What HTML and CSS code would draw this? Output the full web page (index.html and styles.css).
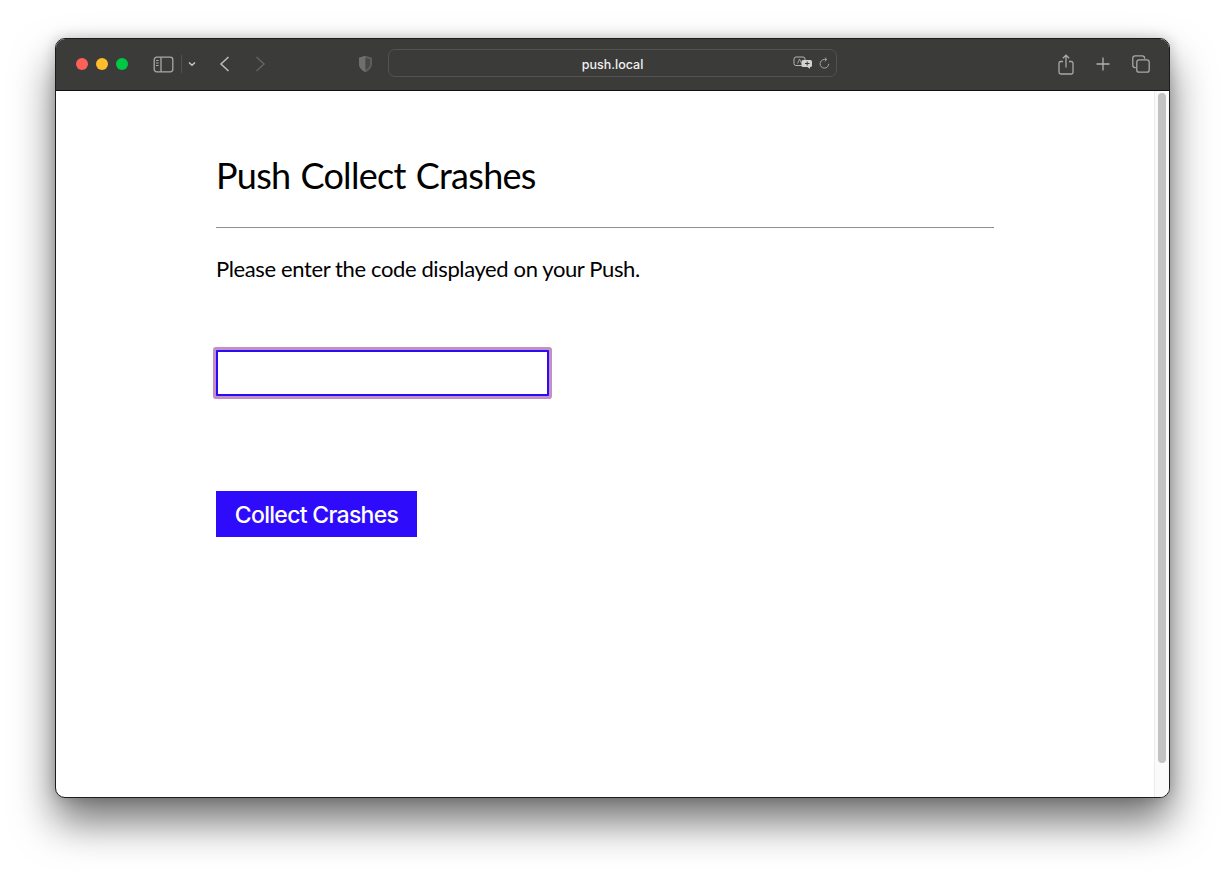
FILE: index.html
```html
<!DOCTYPE html>
<html lang="en">
<head>
<meta charset="utf-8">
<title>Push Collect Crashes</title>
<link rel="stylesheet" href="styles.css">
</head>
<body>
<div class="window">
  <header class="toolbar">
    <div class="lights">
      <span class="light red"></span><span class="light yellow"></span><span class="light green"></span>
    </div>
    <svg class="ic sidebar" width="21" height="17" viewBox="0 0 21 17" fill="none" stroke="#a9a9a8" stroke-width="1.3"><rect x="1.2" y="1.2" width="18.6" height="14.6" rx="2.5"/><path d="M8 1.2v14.6"/><path d="M3 4.5h2.6M3 7h2.6M3 9.500h2.600" stroke-width="1"/></svg>
    <span class="sep"></span>
    <svg class="ic chev" width="8" height="6" viewBox="0 0 8 6" fill="none" stroke="#c6c6c5" stroke-width="1.500"><path d="M1 1.500l3 2.800 3-2.800"/></svg>
    <svg class="ic back" width="11" height="16" viewBox="0 0 11 16" fill="none" stroke="#bdbdbc" stroke-width="1.500"><path d="M9.500 1L2 8l7.500 7"/></svg>
    <svg class="ic fwd" width="11" height="16" viewBox="0 0 11 16" fill="none" stroke="#636362" stroke-width="1.500"><path d="M1.500 1L9 8l-7.500 7"/></svg>
    <svg class="ic shield" width="15" height="18" viewBox="0 0 15 18"><path d="M7.500 .8L14 2.800v6c0 4-3 6.800-6.500 8.400C4 15.600 1 12.800 1 8.800v-6z" fill="#5d5d5c"/><path d="M7.500 .8L1 2.800v6c0 4 3 6.800 6.500 8.400z" fill="#6f6f6e"/><path d="M7.500 3L12 4.300v4.500c0 2.800-2 4.800-4.500 6.100z" fill="#484847"/></svg>
    <div class="address">
      <span class="host">push.local</span>
      <svg class="ic translate" width="20" height="14" viewBox="0 0 20 14" fill="none"><rect x="1" y="1" width="11" height="8.500" rx="2" stroke="#b5b5b4"/><path d="M4.500 7.500L6.500 3l2 4.500" stroke="#b5b5b4" stroke-width=".8"/><path d="M10 4h7.500a1.500 1.500 0 0 1 1.500 1.500v4a1.500 1.500 0 0 1-1.500 1.500H17v2l-2.500-2H10a1.500 1.500 0 0 1-1.500-1.500v-4A1.500 1.500 0 0 1 10 4z" fill="#d2d2d1"/><path d="M12 7.500h4.500M14.200 5.500v4" stroke="#3c3c3b"/></svg>
      <svg class="ic reload" width="11" height="13" viewBox="0 0 11 13" fill="none" stroke="#a5a5a4" stroke-width="1"><path d="M9.700 6.800a4.300 4.300 0 1 1-4.300-4.300h2"/><path d="M5.800 .6l2 1.900-2 1.900"/></svg>
    </div>
    <svg class="ic share" width="16" height="21" viewBox="0 0 16 21" fill="none" stroke="#a9a9a8" stroke-width="1.300"><path d="M5 7.500H2.800A1.800 1.800 0 0 0 1 9.300v8.900A1.800 1.800 0 0 0 2.800 20h10.400a1.800 1.800 0 0 0 1.800-1.800V9.300a1.800 1.800 0 0 0-1.800-1.800H11"/><path d="M8 13.500V1.300M4.800 4.300L8 1.200l3.200 3.100"/></svg>
    <svg class="ic plus" width="14" height="14" viewBox="0 0 14 14" stroke="#b2b2b1" stroke-width="1.300"><path d="M7 .5v13M.5 7h13"/></svg>
    <svg class="ic tabs" width="18" height="18" viewBox="0 0 18 18" fill="none" stroke="#a9a9a8" stroke-width="1.300"><path d="M3.800 12.600H3A2.300 2.300 0 0 1 .8 10.300V3A2.300 2.300 0 0 1 3 .8h7.300a2.300 2.300 0 0 1 2.300 2.200v.8"/><rect x="4.800" y="4.800" width="12.400" height="12.400" rx="2.300"/></svg>
  </header>
  <div class="viewport">
    <main class="content">
      <h1 class="title">Push Collect Crashes</h1>
      <hr class="rule">
      <p class="lead">Please enter the code displayed on your Push.</p>
      <input class="code" type="text" aria-label="Code">
      <button class="submit" type="button">Collect Crashes</button>
    </main>
    <div class="scrollbar"><span class="thumb"></span></div>
  </div>
</div>
</body>
</html>
```
FILE: styles.css
```css
* { box-sizing: border-box; }
html, body { margin: 0; height: 100%; background: #fff; overflow: hidden; }
.window {
  width: 1115px;
  height: 760px;
  margin: 38px 0 0 55px;
  border: 1px solid #1c1c1c;
  border-radius: 10px;
  overflow: hidden;
  display: flex;
  flex-direction: column;
  background: #fff;
  box-shadow: 0 24px 42px rgba(0,0,0,.55), 0 0 14px rgba(0,0,0,.2);
}
.toolbar {
  height: 52px;
  flex: none;
  background: #3b3b39;
  border-bottom: 1px solid #111;
  display: flex;
  align-items: center;
  padding: 0 0 1px 20px;
}
.lights { display: flex; gap: 8px; }
.light { width: 12px; height: 12px; border-radius: 50%; }
.red { background: #fe5f57; }
.yellow { background: #febc2e; }
.green { background: #00c744; }
.ic { flex: none; display: block; }
.sidebar { margin-left: 25px; }
.sep { width: 1px; height: 18px; background: #525251; margin-left: 7px; }
.chev { margin-left: 6px; }
.back { margin-left: 23px; }
.fwd { margin-left: 25px; }
.shield { margin-left: 92px; }
.address {
  width: 449px;
  height: 28px;
  margin: 0 0 2px 15px;
  border: 1px solid #535352;
  border-radius: 7px;
  display: flex;
  align-items: center;
  position: relative;
  padding-right: 6px;
}
.host {
  position: absolute;
  left: 0;
  right: 0;
  top: 8px;
  text-align: center;
  font: 500 12.5px/13px Inter, "Liberation Sans", sans-serif;
  color: #f1f1f1;
}
.translate { margin-left: auto; }
.reload { margin-left: 6px; }
.share { margin-left: 221px; }
.plus { margin-left: 22px; }
.tabs { margin-left: 22px; }
.viewport { flex: 1; display: flex; min-height: 0; }
.content { flex: 1; padding: 63px 160px 0 160px; display: flex; flex-direction: column; align-items: flex-start; }
.title {
  margin: 0;
  font: 400 36px/42px Lato, "Open Sans", sans-serif;
  letter-spacing: -.7px;
  word-spacing: 1.500px;
  color: #000;
  white-space: nowrap;
}
.rule { width: 778px; margin: 31px 0 0; border: 0; border-top: 1px solid #8f8f8f; }
.lead {
  margin: 27px 0 0;
  font: 400 22px/28px Lato, "Open Sans", sans-serif;
  letter-spacing: -.38px;
  color: #000;
  white-space: nowrap;
}
.code {
  display: block;
  width: 333px;
  height: 46px;
  margin: 67px 0 0;
  border: 2px solid #2c0cf5;
  border-radius: 1px;
  box-shadow: 0 0 0 3px #c48fc4;
  outline: 0;
  background: #fff;
}
.submit {
  width: 201px;
  height: 46px;
  margin-top: 95px;
  border: 0;
  background: #2e0cfb;
  color: #fff;
  font: 500 23px/1 Inter, "Liberation Sans", sans-serif;
  letter-spacing: -.7px;
  padding: 2px 0 0;
}
.scrollbar {
  width: 15px;
  flex: none;
  background: #fafafa;
  border-left: 1px solid #ececec;
  padding: 2px 3px 0 3px;
  display: flex;
  flex-direction: column;
}
.thumb { height: 670px; width: 8px; border-radius: 4px; background: #c2c2c2; }
```
